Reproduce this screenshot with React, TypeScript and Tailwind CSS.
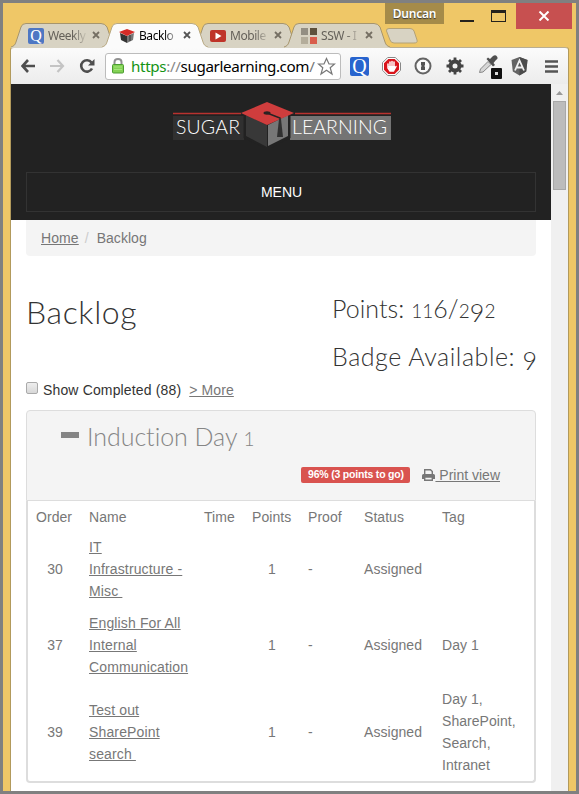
import React from "react";

const sans = "font-['Liberation_Sans',Arial,sans-serif]";
const chrome = "font-['Noto_Sans',sans-serif]";
const light = "font-['Lato',sans-serif]";

function TabShape({ active }: { active?: boolean }) {
  return (
    <svg className="absolute inset-0" width="106" height="25" viewBox="0 0 106 25">
      <path
        d="M0 24 C3 23 4 22 5 19 L10 4 Q11 .5 15 .5 H90 Q94 .5 96 4 L101 19 C102 22 103 23 106 24 V25 H0Z"
        fill={active ? "#fbfbfb" : "#d8d3c3"}
      />
      <path
        d="M0 24 C3 23 4 22 5 19 L10 4 Q11 .5 15 .5 H90 Q94 .5 96 4 L101 19 C102 22 103 23 106 24"
        fill="none"
        stroke={active ? "#b8a983" : "#a6956d"}
      />
    </svg>
  );
}

function Tab({ icon, label, active }: { icon: React.ReactNode; label: string; active?: boolean }) {
  return (
    <div className={`relative -mr-[15px] h-[25px] w-[106px] shrink-0 ${active ? "z-10" : ""}`}>
      <TabShape active={active} />
      <div className="relative flex h-[25px] items-center pl-[17px]">
        <span className="flex h-4 w-4 shrink-0">{icon}</span>
        <span className={`ml-1 w-[38px] text-[12px] leading-[18px] tracking-[-0.45px] whitespace-nowrap ${active ? "text-black" : "text-[#65615a]"} [mask-image:linear-gradient(to_right,black_65%,transparent_105%)]`}>
          {label}
        </span>
        <svg className="absolute top-[8px] left-[81px]" width="8" height="8" viewBox="0 0 8 8">
          <path d="M1 1L7 7M7 1L1 7" stroke={active ? "#555" : "#756f63"} strokeWidth="1.8" />
        </svg>
      </div>
    </div>
  );
}

function Quora({ size, color }: { size: string; color: string }) {
  return (
    <span className={`flex items-center justify-center rounded-[2px] font-['Liberation_Serif',serif] leading-none text-white ${size} ${color}`}>
      Q
    </span>
  );
}

function CapIcon() {
  return (
    <svg width="16" height="16" viewBox="0 0 16 16">
      <path d="M1 5L8 8V15L2 12Z" fill="#333" />
      <path d="M8 8L15 5L14 12L8 15Z" fill="#777" />
      <path d="M0 4L8 1L16 4L8 8Z" fill="#d62b27" />
      <path d="M11 7V13" stroke="#333" />
    </svg>
  );
}

function VideoIcon() {
  return (
    <svg width="16" height="16" viewBox="0 0 16 16">
      <rect y="2" width="16" height="12" rx="2" fill="#bf3429" />
      <path d="M5.5 4.5L11.5 8L5.5 11.5Z" fill="#fff" />
    </svg>
  );
}

function SquaresIcon() {
  return (
    <svg width="16" height="16" viewBox="0 0 16 16">
      <path d="M0 0h7v7H0z" fill="#948f83" />
      <path d="M9 0h7v7H9z" fill="#5e513c" />
      <path d="M0 9h7v7H0z" fill="#b4ad9b" />
      <path d="M9 9h7v7H9z" fill="#d95d4b" />
    </svg>
  );
}

function TitleBar() {
  return (
    <div className={`flex h-[45px] shrink-0 ${chrome}`}>
      <div className="-mr-[8px] flex w-[390px] items-end pl-[8px]">
        <Tab icon={<Quora size="h-4 w-4 text-[16px]" color="bg-[#4e77c3]" />} label="Weekly" />
        <Tab icon={<CapIcon />} label="Backlo" active />
        <Tab icon={<VideoIcon />} label="Mobile" />
        <Tab icon={<SquaresIcon />} label="SSW - I" />
      </div>
      <svg className="mt-[25px] -mr-[33px] shrink-0" width="33" height="16" viewBox="0 0 33 16">
        <path d="M4 .5H25Q28 .5 29 3L32 12Q33 15 29 15H9Q6 15 5 12L1.5 3Q1 .5 4 .5Z" fill="#d8d3c3" stroke="#b4a276" />
      </svg>
      <div className="flex h-[21px] w-[59px] shrink-0 items-center justify-center bg-[#a58b49] text-[12px] leading-none font-semibold tracking-[-0.2px] text-white [text-shadow:0_1px_1px_#333]">
        Duncan
      </div>
      <div className="mt-[17px] ml-[16px] h-[2px] w-[14px] shrink-0 bg-[#25221c]" />
      <div className="mt-[7px] ml-[17px] h-[12px] w-[15px] shrink-0 border border-t-[3px] border-[#25221c]" />
      <div className="ml-[10px] flex h-[26px] w-[56px] shrink-0 items-center justify-center bg-[#c75050]">
        <svg width="12" height="10" viewBox="0 0 12 10">
          <path d="M1.5 .5L10.5 9.5M10.5 .5L1.5 9.5" stroke="#fff" strokeWidth="2" />
        </svg>
      </div>
    </div>
  );
}

function Toolbar() {
  return (
    <div className={`flex h-[37px] shrink-0 items-center rounded-t-[3px] border-t border-[#b9ad90] bg-linear-to-b from-[#fbfbfb] to-[#ececec] ${chrome}`}>
      <svg className="ml-[10px] shrink-0" width="76" height="16" viewBox="0 0 76 16" fill="none">
        <path d="M14 8H1.500M7 2L1.500 8L7 14" stroke="#4e4e4e" strokeWidth="2.600" />
        <path d="M29 8H42M36.500 2L42 8L36.500 14" stroke="#c4c4c4" strokeWidth="2.200" />
        <path d="M70.500 4.500A5.700 5.700 0 1 0 71 10.500" stroke="#4e4e4e" strokeWidth="2.600" />
        <path d="M73.500 1V7.500H67Z" fill="#4e4e4e" />
      </svg>
      <div className="ml-[8px] flex h-[27px] w-[236px] shrink-0 items-center rounded-[3px] border border-[#bcbcbc] bg-white">
        <svg className="ml-[6px] shrink-0" width="12" height="16" viewBox="0 0 12 16">
          <path d="M2.500 8V4Q2.500 1 6 1T9.500 4V8" fill="none" stroke="#919191" strokeWidth="2" />
          <rect x=".5" y="6.500" width="11" height="8.500" rx="1" fill="#83d255" stroke="#4c9d32" />
          <path d="M2 9H10M2 11.500H10" stroke="#a6e67e" />
        </svg>
        <span className="ml-[7px] w-[186px] shrink-0 text-[15.200px] leading-[20px] tracking-[-0.36px] whitespace-nowrap text-black">
          <span className="text-[#149414]">https</span>
          <span className="text-[#888]">://</span>sugarlearning.com<span className="text-[#777]">/</span>
        </span>
        <svg className="shrink-0" width="19" height="19" viewBox="0 0 19 19">
          <path d="M9.500 1.500L12 7H17.500L13.200 10.700L15 17L9.500 13.300L4 17L5.800 10.700L1.500 7H7Z" fill="#fff" stroke="#777" strokeWidth="1.200" />
        </svg>
      </div>
      <div className="ml-[9px] flex shrink-0">
        <Quora size="h-[19px] w-[19px] text-[20px]" color="bg-[#2864ce]" />
      </div>
      <svg className="ml-[13px] shrink-0" width="19" height="19" viewBox="0 0 19 19">
        <path d="M5.700 .5H13.300L18.500 5.700V13.300L13.300 18.500H5.700L.5 13.300V5.700Z" fill="#fff" stroke="#888" />
        <path d="M6.300 2H12.700L17 6.300V12.700L12.700 17H6.300L2 12.700V6.300Z" fill="#d9141b" />
        <path d="M6 7V11L8 14H11.500L14 9.500M8 10V5M10 10V4.500M12 10V5" stroke="#fff" strokeWidth="1.500" fill="none" strokeLinecap="round" />
        <path d="M6 9H13V12L11 14H8Z" fill="#fff" />
      </svg>
      <svg className="ml-[13px] shrink-0" width="18" height="18" viewBox="0 0 18 18">
        <circle cx="9" cy="9" r="7.500" fill="#fafafa" stroke="#646464" strokeWidth="2" />
        <path d="M7 5H11V8L10.300 9L11 10V13H7V10L7.700 9L7 8Z" fill="#555" />
      </svg>
      <svg className="ml-[14px] shrink-0" width="18" height="18" viewBox="0 0 18 18" fill="none" stroke="#444">
        <circle cx="9" cy="9" r="4.500" strokeWidth="4" />
        <path d="M9 .5V4M9 14V17.500M.5 9H4M14 9H17.500M3 3L5.500 5.500M12.500 12.500L15 15M15 3L12.500 5.500M5.500 12.500L3 15" strokeWidth="2.800" />
      </svg>
      <svg className="ml-[13px] shrink-0" width="25" height="25" viewBox="0 0 25 25">
        <path d="M2.500 18.500L3.500 15L11 7.500L14 10.500L6 18Z" fill="#d6d6d6" stroke="#888" />
        <path d="M9.500 5L11 3.500L13 5L16 2Q18.500 .5 20 2.500T19 6L16.500 9L18 11L16 12.500Z" fill="#505050" />
        <rect x="14" y="14" width="11" height="11" rx="1" fill="#111" />
        <path d="M18 18h3v3h-3z" fill="#ddd" />
      </svg>
      <svg className="ml-[9px] shrink-0" width="17" height="19" viewBox="0 0 17 19">
        <path d="M8.500 0L16.500 3L15.200 14.500L8.500 18.500L1.800 14.500L.5 3Z" fill="#646464" />
        <path d="M8.500 0L16.500 3L15.200 14.500L8.500 18.500Z" fill="#4b4b4b" />
        <path d="M4 13.500L8.500 3.500L13 13.500M6 10.500H11" fill="none" stroke="#f0f0f0" strokeWidth="1.800" />
      </svg>
      <svg className="ml-[17px] shrink-0" width="13" height="13" viewBox="0 0 13 13">
        <path d="M0 1.500H13M0 6.500H13M0 11.500H13" stroke="#555" strokeWidth="2.600" />
      </svg>
    </div>
  );
}

function Logo() {
  return (
    <svg className={`block ${light}`} width="220" height="46" viewBox="0 0 220 46">
      <path d="M0 11.500H68M122 11.500H218" stroke="#b9322f" strokeWidth="1.400" />
      <path d="M0 14H71V38H0z" fill="#303030" />
      <path d="M117 14H218V38H117z" fill="#747474" />
      <text x="3" y="32" fontSize="19.500" fontWeight="300" fill="#fff" textLength="64">SUGAR</text>
      <text x="119" y="32" fontSize="19.500" fontWeight="300" fill="#fff" textLength="95">LEARNING</text>
      <path d="M72 12L95 22L116 12V35L95 46L72 35Z" fill="#222" stroke="#222" strokeWidth="3" />
      <path d="M73 13L94 23V45L73 34Z" fill="#383838" />
      <path d="M95 23L115 13V34L95 44Z" fill="#777" />
      <path d="M68 11L94 0L121 11L94 23Z" fill="#cf3d3d" />
      <path d="M94 11L107 16V26" fill="none" stroke="#242424" strokeWidth="1.500" />
      <ellipse cx="94" cy="11" rx="3.500" ry="1.700" fill="#2b2222" />
      <path d="M106 17H108L110 35H104Z" fill="#303030" />
    </svg>
  );
}

const rows = [
  { order: 30, name: ["IT", "Infrastructure -", "Misc\u00a0"], tag: [] as string[] },
  { order: 37, name: ["English For All", "Internal", "Communication"], tag: ["Day 1"] },
  { order: 39, name: ["Test out", "SharePoint", "search\u00a0"], tag: ["Day 1,", "SharePoint,", "Search,", "Intranet"] },
];

const columns = "grid grid-cols-[53px_115px_48px_56px_56px_78px_100px] items-center [&>div]:px-2";

function TaskTable() {
  return (
    <div className="h-[282px] rounded-b-[4px] border-x-2 border-b-2 border-[#ddd] bg-white leading-[22px] tracking-[0.05px]">
      <div className={`${columns} h-[30px] pt-[2px]`}>
        <div>Order</div>
        <div>Name</div>
        <div>Time</div>
        <div>Points</div>
        <div>Proof</div>
        <div>Status</div>
        <div>Tag</div>
      </div>
      {rows.map((row) => (
        <div key={row.order} className={`${columns} py-[5px]`}>
          <div className="pl-[9px]! text-center">{row.order}</div>
          <div className="tracking-[0.14px] whitespace-nowrap underline">
            {row.name.map((line) => (
              <div key={line}>{line}</div>
            ))}
          </div>
          <div />
          <div className="text-center">1</div>
          <div>-</div>
          <div>Assigned</div>
          <div>
            {row.tag.map((line) => (
              <div key={line}>{line}</div>
            ))}
          </div>
        </div>
      ))}
    </div>
  );
}

function Page() {
  return (
    <div className="w-[540px] shrink-0 bg-white text-[14px] text-[#777]">
      <header className="h-[136px] bg-[#222] px-[15px] pt-[18px]">
        <div className="pl-[147px]">
          <Logo />
        </div>
        <div className="mt-[24px] flex h-[40px] items-center justify-center border border-[#333] pl-px text-white">MENU</div>
      </header>
      <div className="px-[15px]">
        <nav className="flex h-[36px] items-center rounded-b-[4px] bg-[#f4f4f4] px-[15px]">
          <span className="tracking-[0.1px] underline">Home</span>
          <span className="ml-[6px] text-[#ccc]">/</span>
          <span className="ml-[8px] tracking-[0.05px]">Backlog</span>
        </nav>
        <div className={`flex h-[123px] justify-between text-[#333] ${light} font-light`}>
          <h1 className="mt-[36px] text-[32px] leading-[40px] tracking-[0.6px]">Backlog</h1>
          <div className="mt-[36px] w-[204px] text-[25px] leading-[32px] whitespace-nowrap">
            <p className="tracking-[0.05px]">
              Points: <span className="text-[19px]">11</span>6/<span className="text-[19px]">2</span>
              <span className="relative top-[4px]">9</span>
              <span className="text-[19px]">2</span>
            </p>
            <p className="mt-[13px] tracking-[0.54px]">
              Badge Available: <span className="relative top-[4px]">9</span>
            </p>
          </div>
        </div>
        <div className="flex h-[31px] items-start leading-[22px] text-[#333]">
          <span className="mt-[3px] h-[12px] w-[12px] rounded-[2px] border border-[#aaa] bg-linear-to-b from-[#eee] to-[#d8d8d8]" />
          <span className="ml-[5px] tracking-[0.15px]">Show Completed (88)</span>
          <span className="ml-[8px] tracking-[0.1px] text-[#777] underline">&gt; More</span>
        </div>
        <section>
          <div className="h-[91px] rounded-t-[4px] border border-[#ddd] bg-[#f4f4f4]">
            <div className="flex h-[51px] items-center pl-[34px]">
              <span className="mb-[3px] h-[6px] w-[18px] bg-[#858585]" />
              <span className={`ml-[8px] text-[25px] tracking-[-0.05px] text-[#858585] ${light} font-light`}>
                Induction Day <span className="text-[19px]">1</span>
              </span>
            </div>
            <div className="mt-[2px] flex h-[22px] items-center justify-end pr-[35px]">
              <span className="flex h-[16px] w-[109px] items-center justify-center rounded-[2px] bg-[#d9534f] text-[10.500px] font-bold tracking-[-0.2px] whitespace-nowrap text-white">
                96% (3 points to go)
              </span>
              <svg className="ml-[12px]" width="13" height="12" viewBox="0 0 13 12">
                <path d="M2.700 6V.7H8.500L10.300 2.500V6" fill="none" stroke="#777" strokeWidth="1.400" />
                <path d="M0 10V6.500Q0 5 1.500 5H11.500Q13 5 13 6.500V10H11V8H2V10Z" fill="#777" />
                <path d="M2.700 8H10.300V11.300H2.700Z" fill="#f4f4f4" stroke="#777" strokeWidth="1.400" />
              </svg>
              <span className="whitespace-pre underline"> Print view</span>
            </div>
          </div>
          <TaskTable />
        </section>
      </div>
    </div>
  );
}

function Scrollbar() {
  return (
    <div className="flex w-[17px] flex-col items-center bg-[#f0f0f0]">
      <svg className="mt-[7px]" width="7" height="4" viewBox="0 0 7 4">
        <path d="M0 4L3.500 0L7 4Z" fill="#999" />
      </svg>
      <div className="mt-[6px] h-[89px] w-[13px] border border-[#a8a8a8] bg-[#bcbcbc]" />
    </div>
  );
}

export default function App() {
  return (
    <div className={`flex h-[794px] w-[579px] flex-col overflow-hidden border-[3px] border-[#808080] bg-[#efc767] ${sans}`}>
      <TitleBar />
      <div className="mr-[7px] ml-[7px] -mt-px flex min-h-0 flex-1 flex-col rounded-t-[3px] border-x border-[#b29a5c]">
        <Toolbar />
        <div className="flex min-h-0 flex-1">
          <Page />
          <Scrollbar />
        </div>
      </div>
    </div>
  );
}
